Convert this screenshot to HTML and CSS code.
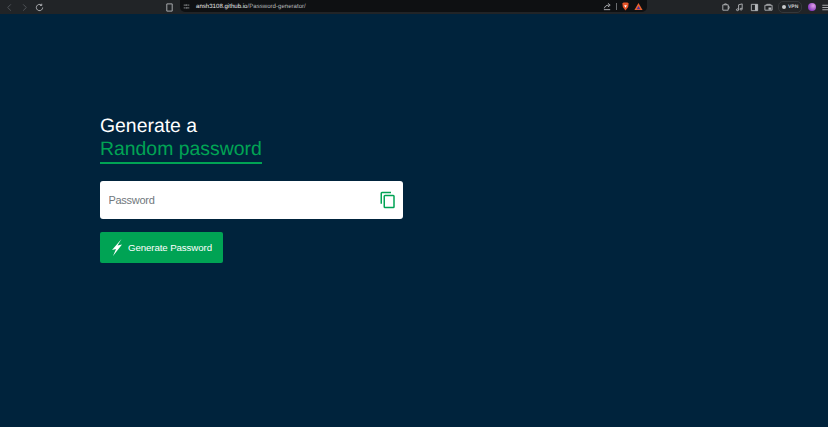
FILE: index.html
```html
<!DOCTYPE html>
<html lang="en">
<head>
<meta charset="utf-8">
<title>Password generator</title>
<link rel="stylesheet" href="styles.css">
</head>
<body>
<header class="chrome">
  <div class="nav">
    <svg class="ic dim" viewBox="0 0 10 10"><path d="M6.500 1.500 3 5l3.500 3.500"/></svg>
    <svg class="ic dim" viewBox="0 0 10 10"><path d="M3.500 1.500 7 5 3.500 8.500"/></svg>
    <svg class="ic" viewBox="0 0 10 10"><path d="M8.500 5A3.500 3.500 0 1 1 7.200 2.300M7.500 .8v2h-2"/></svg>
  </div>
  <div class="center">
    <svg class="ic" viewBox="0 0 10 10"><path d="M2 1h6v8H2z"/></svg>
    <div class="url">
      <svg class="ic tune" viewBox="0 0 10 10"><path d="M1 3h4M7 3h2M1 7h2M5 7h4M5.500 1.800v2.400M4.500 5.800v2.400"/></svg>
      <span class="addr"><b>ansh3108.github.io</b>/Password-generator/</span>
      <div class="url-end">
        <svg class="ic" viewBox="0 0 10 10"><path d="M1 8.500h7M1.500 7c.5-2 2-3.500 5-3.500M5.500 1.500 8 3.500 5.500 5.500"/></svg>
        <span class="sep"></span>
        <svg class="brand" viewBox="0 0 10 10"><path class="lion" d="M1.500 1.500 3 .5h4l1.500 1-.5 4-3 4-3-4z"/><path class="lion-in" d="M3.500 3.500h3L5 6.500z"/></svg>
        <svg class="brand" viewBox="0 0 10 10"><path class="tri-a" d="M5 1 9.500 9H.5z"/><path class="tri-b" d="M5 4.500 7 8H3z"/></svg>
      </div>
    </div>
  </div>
  <div class="tools">
    <svg class="ic" viewBox="0 0 10 10"><path d="M2 2h6v6H2zM4 2V1h2v1M8 4h1v2H8"/></svg>
    <svg class="ic" viewBox="0 0 10 10"><path d="M4 7.500V2l4-1v5.500M4 7.500a1.200 1 0 1 1-2.400 0 1.200 1 0 0 1 2.400 0zM8 6.800a1.200 1 0 1 1-2.400 0 1.200 1 0 0 1 2.400 0z"/></svg>
    <svg class="ic" viewBox="0 0 10 10"><path d="M1.500 1.500h7v7h-7z"/><path class="fill" d="M5.500 1.500h3v7h-3z"/></svg>
    <svg class="ic" viewBox="0 0 10 10"><path d="M1 2.500h8v5.500H1zM3 2.500V1.500h4v1"/><path class="fill" d="M5 5h3v2.500H5z"/></svg>
    <span class="vpn"><i class="shield"></i>VPN</span>
    <i class="avatar"></i>
    <svg class="ic" viewBox="0 0 10 10"><path d="M1.500 2.500h7M1.500 5h7M1.500 7.500h7"/></svg>
  </div>
</header>
<main class="page">
  <section class="panel">
    <h1 class="title">Generate a<br><span class="accent">Random password</span></h1>
    <div class="field">
      <input class="input" type="text" placeholder="Password">
      <svg class="copy" viewBox="0 0 24 24"><path d="M16 1H4a2 2 0 0 0-2 2v14h2V3h12V1zm3 4H8a2 2 0 0 0-2 2v14a2 2 0 0 0 2 2h11a2 2 0 0 0 2-2V7a2 2 0 0 0-2-2zm0 16H8V7h11v14z"/></svg>
    </div>
    <button class="generate" type="button">
      <svg class="bolt" viewBox="0 0 10 17"><path d="M9.500 0 0 11l4-1-3 7 9-11.500-4.500 1z"/></svg>
      Generate Password
    </button>
  </section>
</main>
</body>
</html>
```
FILE: styles.css
```css
* { box-sizing: border-box; }
html, body { height: 100%; margin: 0; }
body {
  display: flex;
  flex-direction: column;
  background: #00233c;
  font-family: "Liberation Sans", Arial, sans-serif;
  text-rendering: geometricPrecision;
  overflow: hidden;
}
.chrome {
  height: 14px;
  flex: none;
  display: flex;
  align-items: center;
  background: #212427;
  color: #c8cacc;
}
.ic { width: 9px; height: 9px; flex: none; fill: none; stroke: #b4b7ba; stroke-width: 1; }
.ic .fill { fill: #b4b7ba; stroke: none; }
.ic.dim { stroke: #54585c; }
.nav { flex: none; width: 165px; padding-left: 5px; display: flex; align-items: center; gap: 6px; }
.center { flex: none; display: flex; align-items: center; gap: 6px; height: 100%; }
.url {
  width: 467px;
  height: 12px;
  margin-top: -2px;
  padding: 0 4px 0 3px;
  display: flex;
  align-items: center;
  gap: 6px;
  background: #0e1012;
  border-radius: 0 0 5px 5px;
}
.tune { width: 7px; height: 7px; }
.addr { font-size: 6.100px; color: #b4b7ba; white-space: nowrap; }
.addr b { font-weight: 400; color: #e6e8ea; }
.url-end { margin-left: auto; display: flex; align-items: center; gap: 4px; }
.sep { width: 1px; height: 7px; background: #6a6d70; }
.brand { width: 9px; height: 9px; }
.lion { fill: #e8562a; }
.lion-in { fill: #fff; }
.tri-a { fill: #e8632e; }
.tri-b { fill: #4b2ea0; }
.tools { margin-left: 74px; flex: 1; display: flex; align-items: center; gap: 5.250px; }
.vpn {
  height: 12px;
  padding: 0 3px;
  display: flex;
  align-items: center;
  gap: 2px;
  border: 1px solid #35383b;
  border-radius: 5px;
  font-size: 5px;
  font-weight: 700;
  color: #c8cacc;
}
.shield { width: 4px; height: 4px; border-radius: 50%; background: #c8cacc; }
.avatar { width: 8px; height: 8px; border-radius: 50%; background: radial-gradient(circle at 65% 35%, #e0a0e8, #8a3cc0 70%); }
.page { flex: 1; padding: 101px 0 0 100px; }
.panel { width: 303px; display: flex; flex-direction: column; align-items: flex-start; }
.title {
  margin: 0 0 17px;
  padding-bottom: 1px;
  font-size: 19.400px;
  font-weight: 400;
  line-height: 23px;
  color: #fff;
  border-bottom: 2px solid #00a354;
}
.accent { color: #00a354; }
.field { position: relative; width: 100%; margin-bottom: 13px; }
.input {
  display: block;
  width: 100%;
  height: 38px;
  padding: 0 8.500px;
  border: 0;
  border-radius: 3px;
  background: #fff;
  font: 11px "Liberation Sans", Arial, sans-serif;
  letter-spacing: -.29px;
}
.input::placeholder { color: #70777c; opacity: 1; }
.copy { position: absolute; top: 9px; right: 6px; width: 18px; height: 20px; fill: #00a354; }
.generate {
  height: 31px;
  padding: 0 11px 0 12px;
  display: flex;
  align-items: center;
  gap: 6px;
  border: 0;
  border-radius: 2px;
  background: #00a354;
  color: #fff;
  font: 9.700px "Liberation Sans", Arial, sans-serif;
  letter-spacing: -.1px;
}
.bolt { width: 10px; height: 17px; fill: #fff; }
```
